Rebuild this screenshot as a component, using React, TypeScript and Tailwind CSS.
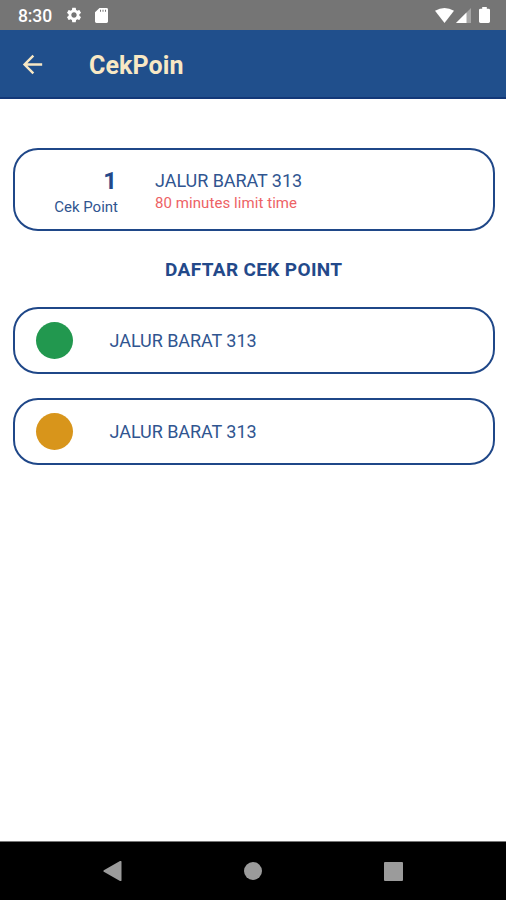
import React from 'react';
import { MdSettings, MdArrowBack } from 'react-icons/md';

function StatusBar() {
  return (
    <div className="flex h-[30px] shrink-0 items-center bg-[#757575] pl-[18px] pr-[16px] text-white">
      <span className="w-[47px] pt-[3px] text-[17.5px] font-medium leading-none tracking-[-0.1px]">8:30</span>
      <MdSettings className="size-[18px]" />
      <svg className="ml-[12px] mt-px h-[15px] w-[13px]" viewBox="0 0 13 16" preserveAspectRatio="none" fill="currentColor">
        <path fillRule="evenodd" d="M4.5 0H11.5Q13 0 13 1.5V14.5Q13 16 11.5 16H1.5Q0 16 0 14.5V4.5ZM5 1.8V4H6V1.8ZM7.5 1.8V4H8.5V1.8ZM10 1.8V4H11V1.8Z" />
      </svg>
      <svg className="ml-auto h-[15px] w-[19px]" viewBox="0 0 20 15" preserveAspectRatio="none" fill="currentColor">
        <path d="M0 2.8Q10-2.8 20 2.8L10 15Z" />
      </svg>
      <svg className="ml-[2px] mt-px h-[15px] w-[15px]" viewBox="0 0 15 15" fill="currentColor">
        <path opacity=".35" d="M15 0V15H0Z" />
        <path d="M10.5 4.5V15H0Z" />
      </svg>
      <svg className="ml-[8px] h-[16px] w-[11px]" viewBox="0 0 11 17" preserveAspectRatio="none" fill="currentColor">
        <path d="M3.2 0H7.8V1.8H9.5Q11 1.8 11 3.3V15.5Q11 17 9.5 17H1.5Q0 17 0 15.5V3.3Q0 1.8 1.5 1.8H3.2Z" />
      </svg>
    </div>
  );
}

function CheckPoint({ color, name }: { color: string; name: string }) {
  return (
    <div className="flex h-[67px] items-center rounded-[25px] border-2 border-[#1f4788] pl-[21px]">
      <span className={`size-[37px] rounded-full ${color}`} />
      <span className="ml-[37px] text-[18px] leading-6 tracking-[-0.05px]">{name}</span>
    </div>
  );
}

export default function App() {
  return (
    <div className="flex h-[900px] w-[506px] flex-col overflow-hidden bg-white font-['Roboto',sans-serif] text-[#305590]">
      <StatusBar />
      <header className="flex h-[69px] shrink-0 items-center border-b-2 border-[#133878] bg-[#204f8c] pl-[18px] text-[#f8e8c4]">
        <MdArrowBack className="mt-px size-[29px]" />
        <h1 className="ml-[42px] mt-[5px] text-[25px] font-bold leading-8 tracking-[0.1px]">CekPoin</h1>
      </header>
      <main className="flex-1 pl-[12.5px] pr-[11px] pt-[49px]">
        <section className="flex h-[83px] rounded-[25px] border-2 border-[#1f4788] pt-[17px]">
          <div className="w-[103.5px] text-right">
            <div className="pr-px text-[24px] font-bold leading-[28px] text-[#23498a]">1</div>
            <div className="mt-[2px] text-[15px] leading-[20px]">Cek Point</div>
          </div>
          <div className="ml-[37px] pt-[2px]">
            <div className="text-[18px] leading-[24px] tracking-[-0.05px]">JALUR BARAT 313</div>
            <div className="text-[15px] leading-[20px] tracking-[0.07px] text-[#ed6265]">80 minutes limit time</div>
          </div>
        </section>
        <h2 className="mt-[27px] text-center text-[19px] font-bold leading-6 tracking-[0.35px] text-[#23498a]">DAFTAR CEK POINT</h2>
        <div className="mt-[25px] flex flex-col gap-6">
          <CheckPoint color="bg-[#22984f]" name="JALUR BARAT 313" />
          <CheckPoint color="bg-[#d8951b]" name="JALUR BARAT 313" />
        </div>
      </main>
      <nav className="flex h-[59px] shrink-0 items-center border-t border-[#777777] bg-black pl-[103px] text-[#9b9b9b]">
        <svg className="size-[20px]" viewBox="0 0 20 20" fill="currentColor">
          <path d="M.8 9.2Q0 10 .8 10.8L17 20Q18.5 20.5 18.5 19V1Q18.5-.5 17 0Z" />
        </svg>
        <span className="ml-[121px] size-[18px] rounded-full bg-[#9b9b9b]" />
        <span className="ml-[122px] size-[19px] rounded-[1px] bg-[#9b9b9b]" />
      </nav>
    </div>
  );
}
